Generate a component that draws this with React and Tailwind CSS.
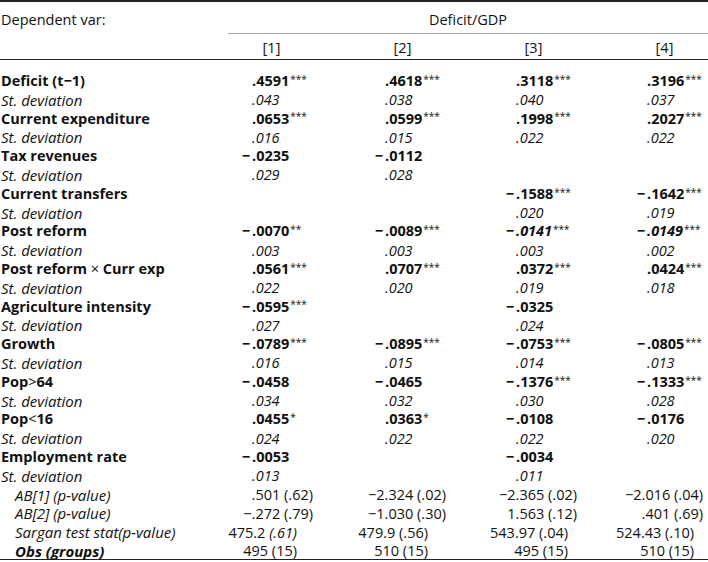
import React from 'react';

// decimal point sits at a fixed offset inside each column
const decW = ['w-[46px]', 'w-[48px]', 'w-[48px]', 'w-[48px]'];
const abPr = ['pr-[24px]', 'pr-[22px]', 'pr-[22px]', 'pr-[27px]'];
const sgPr = ['pr-[40px]', 'pr-[40px]', 'pr-[31px]', 'pr-[36px]'];

const M = '\u2212';

const rows = [
  { label: 'Deficit (t\u22121)', coef: [['', '.4591', '***'], ['', '.4618', '***'], ['', '.3118', '***'], ['', '.3196', '***']], sd: ['.043', '.038', '.040', '.037'] },
  { label: 'Current expenditure', coef: [['', '.0653', '***'], ['', '.0599', '***'], ['', '.1998', '***'], ['', '.2027', '***']], sd: ['.016', '.015', '.022', '.022'] },
  { label: 'Tax revenues', coef: [[M, '.0235', ''], [M, '.0112', ''], null, null], sd: ['.029', '.028', '', ''] },
  { label: 'Current transfers', coef: [null, null, [M, '.1588', '***'], [M, '.1642', '***']], sd: ['', '', '.020', '.019'] },
  { label: 'Post reform', coef: [[M, '.0070', '**'], [M, '.0089', '***'], [M, '.0141', '***', true], [M, '.0149', '***', true]], sd: ['.003', '.003', '.003', '.002'] },
  { label: <>Post reform <span className="font-normal">×</span> Curr exp</>, coef: [['', '.0561', '***'], ['', '.0707', '***'], ['', '.0372', '***'], ['', '.0424', '***']], sd: ['.022', '.020', '.019', '.018'] },
  { label: 'Agriculture intensity', coef: [[M, '.0595', '***'], null, [M, '.0325', ''], null], sd: ['.027', '', '.024', ''] },
  { label: 'Growth', coef: [[M, '.0789', '***'], [M, '.0895', '***'], [M, '.0753', '***'], [M, '.0805', '***']], sd: ['.016', '.015', '.014', '.013'] },
  { label: <>Pop<span className="font-normal">&gt;</span>64</>, coef: [[M, '.0458', ''], [M, '.0465', ''], [M, '.1376', '***'], [M, '.1333', '***']], sd: ['.034', '.032', '.030', '.028'] },
  { label: <>Pop<span className="font-normal">&lt;</span>16</>, coef: [['', '.0455', '*'], ['', '.0363', '*'], [M, '.0108', ''], [M, '.0176', '']], sd: ['.024', '.022', '.022', '.020'] },
  { label: 'Employment rate', coef: [[M, '.0053', ''], null, [M, '.0034', ''], null], sd: ['.013', '', '.011', ''] },
];

const stats = [
  { label: 'AB[1] (p-value)', pad: abPr, vals: ['.501 (.62)', `${M}2.324 (.02)`, `${M}2.365 (.02)`, `${M}2.016 (.04)`] },
  { label: 'AB[2] (p-value)', pad: abPr, vals: [`${M}.272 (.79)`, `${M}1.030 (.30)`, '1.563 (.12)', '.401 (.69)'] },
  { label: 'Sargan test stat(p-value)', pad: sgPr, vals: [<>475.2 <i>(.61)</i></>, '479.9 (.56)', '543.97 (.04)', '524.43 (.10)'] },
  { label: 'Obs (groups)', bold: true, pad: sgPr, vals: ['495 (15)', '510 (15)', '495 (15)', '510 (15)'] },
];

const GRID = 'grid grid-cols-[206px_131px_131px_131px_131px] h-[18.8px] items-center';

const Coef = ({ v, i }) => {
  if (!v) return <div />;
  const [pre, num, stars, ital] = v;
  return (
    <div className="flex items-center font-bold">
      <span className={`${decW[i]} text-right pr-[2px]`}>{pre}</span>
      <span className={ital ? 'italic' : ''}>{num}</span>
      {stars && <sup className="font-normal text-[10px] relative -top-[2px] ml-[1px]">{stars}</sup>}
    </div>
  );
};

const Sd = ({ v, i }) => (
  <div className="flex items-center italic">
    <span className={decW[i]}></span>
    <span>{v}</span>
  </div>
);

export default function App() {
  return (
    <div className="w-[708px] h-[562px] overflow-hidden bg-white text-[14.5px] text-[#111] font-['Open_Sans','Noto_Sans',sans-serif]">
      <div className="border-t-2 border-[#222]">
        {/* title row */}
        <div className="flex h-[31px] pt-[5px] items-center">
          <div className="w-[228px] pl-[1px]">Dependent var:</div>
          <div className="flex-1 text-center">Deficit/GDP</div>
        </div>
        <div className="flex">
          <div className="w-[228px]" />
          <div className="flex-1 h-px bg-[#a6a6a6]" />
        </div>
        {/* column heads */}
        <div className="grid grid-cols-[206px_131px_131px_131px_131px] h-[26px] pt-[3px] items-center border-b-[1.5px] border-[#222]">
          <div />
          {['[1]', '[2]', '[3]', '[4]'].map((h) => (
            <div key={h} className="text-center">{h}</div>
          ))}
        </div>

        <div className="pt-[10px] border-b-[1.5px] border-[#222]">
          {rows.map((r, k) => (
            <React.Fragment key={k}>
              <div className={GRID}>
                <div className="font-bold pl-[1px] whitespace-nowrap">{r.label}</div>
                {r.coef.map((v, i) => <Coef key={i} v={v} i={i} />)}
              </div>
              <div className={GRID}>
                <div className="italic text-[15px] pl-[1px]">St. deviation</div>
                {r.sd.map((v, i) => <Sd key={i} v={v} i={i} />)}
              </div>
            </React.Fragment>
          ))}
          {stats.map((s, k) => (
            <div key={k} className={GRID}>
              <div className={`italic text-[15px] pl-[15px] whitespace-nowrap ${s.bold ? 'font-bold' : ''}`}>{s.label}</div>
              {s.vals.map((v, i) => (
                <div key={i} className={`text-right whitespace-nowrap ${s.pad[i]}`}>{v}</div>
              ))}
            </div>
          ))}
        </div>
      </div>
    </div>
  );
}
